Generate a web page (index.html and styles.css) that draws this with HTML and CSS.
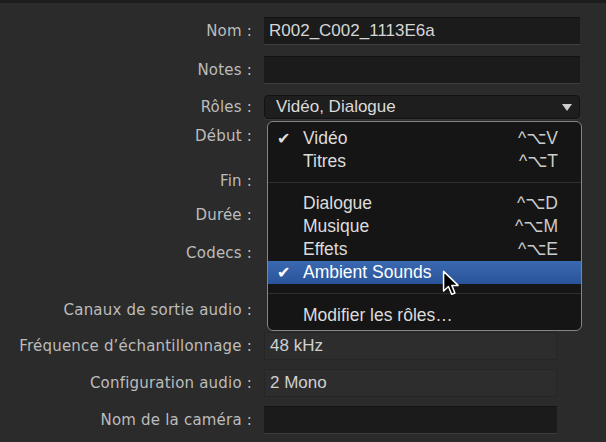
FILE: index.html
```html
<!DOCTYPE html>
<html lang="fr">
<head>
    <meta charset="UTF-8">
    <title>Inspecteur d'informations</title>
    <link rel="stylesheet" href="styles.css">
</head>
<body>
<div class="inspector">
    <div class="props">
        <span class="label">Nom :</span>
        <div class="field">R002_C002_1113E6a</div>

        <span class="label">Notes :</span>
        <div class="field"></div>

        <span class="label">Rôles :</span>
        <div class="popup"><span>Vidéo, Dialogue</span><span class="arrow"></span></div>

        <span class="label">Début :</span>
        <div></div>

        <span class="label">Fin :</span>
        <div></div>

        <span class="label">Durée :</span>
        <div></div>

        <span class="label">Codecs :</span>
        <div></div>

        <span class="label">Canaux de sortie audio :</span>
        <div></div>

        <span class="label">Fréquence d’échantillonnage :</span>
        <div class="field short static">48 kHz</div>

        <span class="label">Configuration audio :</span>
        <div class="field short static">2 Mono</div>

        <span class="label">Nom de la caméra :</span>
        <div class="field short"></div>
    </div>

    <!-- roles popup menu, open over the fields -->
    <div class="menu">
        <div class="item"><span class="check">✔</span><span>Vidéo</span><span class="shortcut">^⌥V</span></div>
        <div class="item"><span class="check"></span><span>Titres</span><span class="shortcut">^⌥T</span></div>
        <div class="sep"></div>
        <div class="item"><span class="check"></span><span>Dialogue</span><span class="shortcut">^⌥D</span></div>
        <div class="item"><span class="check"></span><span>Musique</span><span class="shortcut">^⌥M</span></div>
        <div class="item"><span class="check"></span><span>Effets</span><span class="shortcut">^⌥E</span></div>
        <div class="item active"><span class="check">✔</span><span>Ambient Sounds</span></div>
        <div class="sep last"></div>
        <div class="item"><span class="check"></span><span>Modifier les rôles…</span></div>
    </div>

    <svg class="cursor" width="18" height="27" viewBox="0 0 13 20">
        <path d="M1 1 L1 15.5 L4.6 12.2 L7 18 L9.4 17 L7.1 11.4 L11.8 11.4 Z" fill="#000" stroke="#fff" stroke-width="1.1" stroke-linejoin="round"/>
    </svg>
</div>
</body>
</html>
```

FILE: styles.css
```css
body { margin: 0; background: #2b2b2b; font-family: "DejaVu Sans", sans-serif; }
.inspector { position: relative; height: 442px; box-sizing: border-box; border-top: 3px solid #1d1d1d; overflow: hidden; }

.props { display: grid; grid-template-columns: 252px 316px; column-gap: 12px; padding-top: 14px;
         grid-template-rows: 39px 37px 29px 45px 34px 38px 57px 36px 37px 37px 28px; align-items: start; }
.label { text-align: right; font-size: 15px; line-height: 28px; color: #bcbcbc; letter-spacing: 0.2px; white-space: nowrap; }

.field { height: 28px; box-sizing: border-box; background: #1b1b1b; border-top: 1px solid #131313; border-bottom: 1px solid #3e3e3e;
         padding-left: 5px; font: 17px "Liberation Sans", sans-serif; line-height: 26px; color: #d6d6d6; }
.field.short { width: 293px; }
.field.static { background: #2d2d2d; border: 1px solid #262626; color: #d0d0d0; }

.popup { height: 24px; margin-top: 2px; box-sizing: border-box; display: flex; justify-content: space-between; align-items: center;
         padding: 0 7px 0 11px; background: #1e1e1e; border: 1px solid #121212; border-radius: 4px; box-shadow: 0 1px 0 #363636;
         font: 17px "Liberation Sans", sans-serif; color: #dadada; }
.popup .arrow { width: 0; height: 0; border-left: 5px solid transparent; border-right: 5px solid transparent; border-top: 7px solid #cdcdcd; }

.menu { position: absolute; left: 267px; top: 118px; width: 315px; height: 210px; box-sizing: border-box;
        padding: 5px 0 3px; background: #151515; border: 1px solid #858585; border-radius: 6px;
        font: 17.5px "Liberation Sans", sans-serif; color: #dcdcdc; }
.item { display: flex; height: 23px; line-height: 23px; padding: 0 23px 0 9px; }
.item .check { width: 26px; font-family: "DejaVu Sans", sans-serif; font-size: 16px; }
.item .shortcut { margin-left: auto; font-family: "Liberation Sans", "DejaVu Sans", sans-serif; color: #cccccc; }
.item.active { background: linear-gradient(#3a69b1, #2a5499); color: #fff; }
.sep { height: 1px; background: #2f2f2f; margin: 9px 0; }
.sep.last { margin-bottom: 10px; }

.cursor { position: absolute; left: 442px; top: 267px; }
```
